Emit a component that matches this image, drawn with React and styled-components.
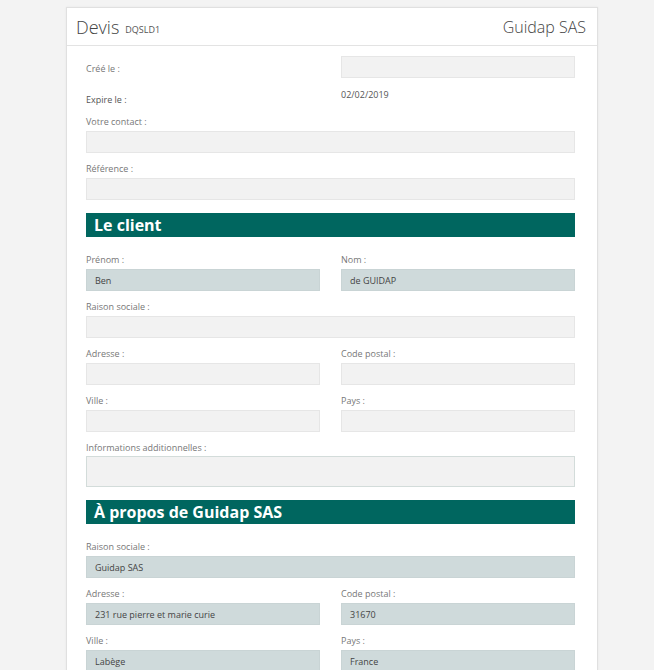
import React from "react";
import styled, { createGlobalStyle } from "styled-components";

const Global = createGlobalStyle`
  html, body { margin: 0; padding: 0; background: #f3f3f3; }
  body { font-family: "Open Sans", "Noto Sans", sans-serif; }
`;

const Page = styled.div`
  padding: 7px 0 0 66px;
  height: 663px;
  overflow: hidden;
`;

const Card = styled.div`
  width: 530px;
  background: #fff;
  border: 1px solid #e0e0e0;
  border-bottom: none;
  box-shadow: 0 0 2px rgba(0, 0, 0, 0.06);
  min-height: 700px;
`;

const Header = styled.div`
  display: flex;
  align-items: center;
  justify-content: space-between;
  height: 37px;
  padding: 0 11px 0 9px;
  border-bottom: 1px solid #e3e3e3;
`;

const Title = styled.div`
  display: flex;
  align-items: baseline;
  gap: 6px;
  font-size: 18px;
  font-weight: 300;
  color: #444;
`;

const Code = styled.span`
  font-size: 9px;
  font-weight: 400;
  color: #555;
  position: relative;
  top: -1px;
`;

const Company = styled.div`
  font-size: 16px;
  font-weight: 300;
  color: #444;
`;

const Body = styled.div`
  padding: 10px 22px 0 19px;
  display: flex;
  flex-direction: column;
`;

const Row = styled.div`
  display: grid;
  grid-template-columns: 1fr 1fr;
  column-gap: 21px;
  margin-bottom: ${(p) => p.$mb ?? 0}px;
`;

const Field = styled.div`
  display: flex;
  flex-direction: column;
  margin-bottom: ${(p) => p.$mb ?? 10}px;
`;

const Label = styled.label`
  font-size: 9px;
  line-height: 12px;
  color: #777;
  margin-bottom: ${(p) => p.$mb ?? 3}px;
  padding-top: ${(p) => p.$pt ?? 0}px;
`;

const Plain = styled.div`
  font-size: 9px;
  line-height: 12px;
  color: #555;
  padding-top: ${(p) => p.$pt ?? 0}px;
`;

const Input = styled.div`
  box-sizing: border-box;
  height: ${(p) => p.$h ?? 22}px;
  background: ${(p) => (p.$filled ? "#cfdadb" : "#f2f2f2")};
  border: 1px solid ${(p) => (p.$area ? "#d3dcda" : p.$filled ? "#c9d4d5" : "#e6e6e6")};
  font-size: 9px;
  color: #444;
  display: flex;
  align-items: center;
  padding: 0 8px;
`;

const Section = styled.div`
  height: 24px;
  background: #00665f;
  color: #fff;
  font-size: 16px;
  font-weight: 700;
  display: flex;
  align-items: center;
  padding: 0 8px;
  margin: ${(p) => p.$mt ?? 3}px 0 ${(p) => p.$mb ?? 17}px;
`;

const F = ({ label, value, filled, mb }) => (
  <Field $mb={mb}>
    <Label>{label}</Label>
    <Input $filled={filled}>{value}</Input>
  </Field>
);

export default function App() {
  return (
    <>
      <Global />
      <Page>
        <Card>
          <Header>
            <Title>
              <span>Devis</span>
              <Code>DQSLD1</Code>
            </Title>
            <Company>Guidap SAS</Company>
          </Header>
          <Body>
            <Row>
              <Label $pt={7} $mb={0}>Créé le :</Label>
              <Input />
            </Row>
            <Row $mb={10}>
              <Plain $pt={16}>Expire le :</Plain>
              <Plain $pt={11}>02/02/2019</Plain>
            </Row>
            <F label="Votre contact :" />
            <F label="Référence :" />
            <Section>Le client</Section>
            <Row>
              <F label="Prénom :" value="Ben" filled />
              <F label="Nom :" value="de GUIDAP" filled />
            </Row>
            <F label="Raison sociale :" />
            <Row>
              <F label="Adresse :" />
              <F label="Code postal :" />
            </Row>
            <Row>
              <F label="Ville :" />
              <F label="Pays :" />
            </Row>
            <Field $mb={0}>
              <Label $mb={2}>Informations additionnelles :</Label>
              <Input $h={31} $area />
            </Field>
            <Section $mt={13} $mb={17}>À propos de Guidap SAS</Section>
            <F label="Raison sociale :" value="Guidap SAS" filled />
            <Row>
              <F label="Adresse :" value="231 rue pierre et marie curie" filled />
              <F label="Code postal :" value="31670" filled />
            </Row>
            <Row>
              <F label="Ville :" value="Labège" filled />
              <F label="Pays :" value="France" filled />
            </Row>
          </Body>
        </Card>
      </Page>
    </>
  );
}
